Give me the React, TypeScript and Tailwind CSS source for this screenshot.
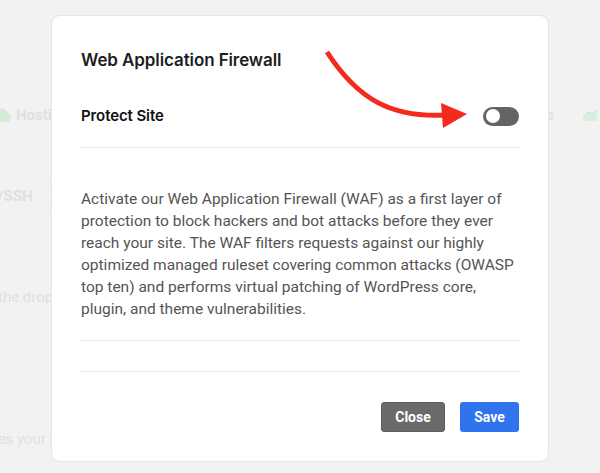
import React from "react";

function Cloud() {
  return (
    <svg width="22" height="14" viewBox="0 0 22 14" className="shrink-0">
      <path d="M6 14a5 5 0 0 1-.6-9.96A6.5 6.5 0 0 1 17.6 5.5 4.3 4.3 0 0 1 17 14Z" fill="#d3ebd9" />
    </svg>
  );
}

function Chart() {
  return (
    <svg width="16" height="14" viewBox="0 0 16 14" className="shrink-0">
      <path d="M1 13h14V3l-4 3-3-2-7 6z" fill="#d9efdf" />
      <path d="M1 9l6-5 3 2 5-4" stroke="#cfe8d5" strokeWidth="1.6" fill="none" />
    </svg>
  );
}

function Toggle() {
  return (
    <div className="w-[36px] h-[19px] rounded-full bg-[#646464] p-[2.5px] flex items-center">
      <div className="w-[14px] h-[14px] rounded-full bg-white" />
    </div>
  );
}

function Background() {
  return (
    <div className="flex flex-col text-[15px] text-[#e0e0e0] font-['Roboto',sans-serif]">
      <div className="h-[104px]" />
      <div className="flex items-center h-[22px] -ml-[10px]">
        <Cloud />
        <span className="ml-[4px] font-bold">Hosting</span>
        <span className="ml-auto font-bold">e</span>
        <span className="ml-[28px] mr-[2px]"><Chart /></span>
      </div>
      <div className="h-[55px]" />
      <div className="flex items-center h-[30px] -ml-[2px]">
        <span className="font-bold">/SSH</span>
        <div className="ml-[14px] w-[40px] h-[30px] border border-[#efefef] rounded" />
      </div>
      <div className="h-[75px]" />
      <div className="h-[22px] -ml-[2px]">the droplet</div>
      <div className="h-[120px]" />
      <div className="h-[22px] -ml-[6px]">les your site</div>
    </div>
  );
}

export default function App() {
  return (
    <div className="relative w-[600px] h-[473px] bg-[#f2f2f2] overflow-hidden">
      <Background />

      <div className="absolute left-[51px] top-[15px] w-[498px] h-[447px] bg-white rounded-[9px] border border-[#e6e6e6] px-[29px] pt-[32px] flex flex-col">
        <h2 className="text-[17px] leading-[24px] font-semibold text-[#1d1d1f] font-['Inter',sans-serif] tracking-[-0.1px]">
          Web Application Firewall
        </h2>
        <div className="mt-[33px] flex items-center justify-between h-[22px]">
          <span className="text-[15px] font-semibold text-[#111] font-['Inter',sans-serif] tracking-[-0.1px]">Protect Site</span>
          <Toggle />
        </div>
        <div className="mt-[20px] border-t border-[#ececec]" />
        <p className="mt-[40px] text-[15.5px] leading-[22px] text-[#555] font-['Roboto',sans-serif]">
          Activate our Web Application Firewall (WAF) as a first layer of protection to block hackers and bot attacks before they ever reach your site. The WAF filters requests against our highly optimized managed ruleset covering common attacks (OWASP top ten) and performs virtual patching of WordPress core, plugin, and theme vulnerabilities.
        </p>
        <div className="mt-[20px] border-t border-[#ececec]" />
        <div className="mt-[30px] border-t border-[#ececec]" />
        <div className="mt-[30px] flex justify-end gap-[15px] font-['Roboto',sans-serif]">
          <button className="h-[30px] w-[64px] rounded-[3px] bg-[#6a6a6a] border border-[#5e5e5e] text-white text-[14px] font-bold">
            Close
          </button>
          <button className="h-[30px] w-[59px] rounded-[3px] bg-[#2f73ef] text-white text-[14px] font-bold">
            Save
          </button>
        </div>
      </div>

      <svg className="absolute left-0 top-0 pointer-events-none" width="600" height="473" viewBox="0 0 600 473">
        <path d="M327 52 C 358 100, 392 118, 446 115" stroke="#f42a1f" strokeWidth="5" fill="none" />
        <polygon points="441,103 467,114 443,128" fill="#f42a1f" />
      </svg>
    </div>
  );
}
